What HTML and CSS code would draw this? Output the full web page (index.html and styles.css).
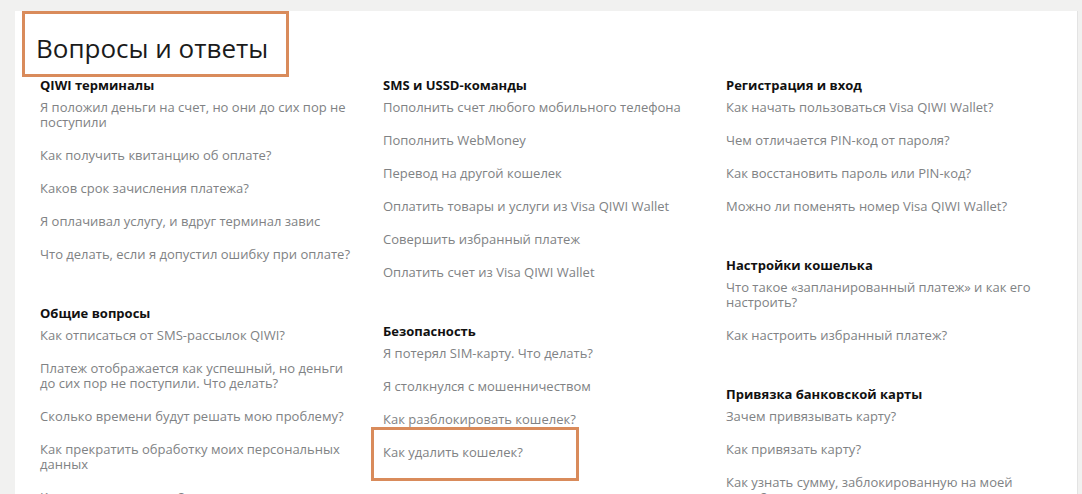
FILE: index.html
```html
<!DOCTYPE html>
<html lang="ru">
<head>
<meta charset="utf-8">
<title>Вопросы и ответы</title>
<link rel="stylesheet" href="styles.css">
</head>
<body>
<div class="card">
  <h1 class="title">Вопросы и ответы</h1>
  <div class="grid">
    <div class="col">
      <section class="sec">
        <h2 class="sec-title">QIWI терминалы</h2>
        <a class="q" href="#">Я положил деньги на счет, но они до сих пор не поступили</a>
        <a class="q" href="#">Как получить квитанцию об оплате?</a>
        <a class="q" href="#">Каков срок зачисления платежа?</a>
        <a class="q" href="#">Я оплачивал услугу, и вдруг терминал завис</a>
        <a class="q" href="#">Что делать, если я допустил ошибку при оплате?</a>
      </section>
      <section class="sec">
        <h2 class="sec-title">Общие вопросы</h2>
        <a class="q" href="#">Как отписаться от SMS-рассылок QIWI?</a>
        <a class="q" href="#">Платеж отображается как успешный, но деньги до сих пор не поступили. Что делать?</a>
        <a class="q" href="#">Сколько времени будут решать мою проблему?</a>
        <a class="q" href="#">Как прекратить обработку моих персональных данных</a>
        <a class="q" href="#">Как изменить данные?</a>
      </section>
    </div>
    <div class="col">
      <section class="sec">
        <h2 class="sec-title">SMS и USSD-команды</h2>
        <a class="q" href="#">Пополнить счет любого мобильного телефона</a>
        <a class="q" href="#">Пополнить WebMoney</a>
        <a class="q" href="#">Перевод на другой кошелек</a>
        <a class="q" href="#">Оплатить товары и услуги из Visa QIWI Wallet</a>
        <a class="q" href="#">Совершить избранный платеж</a>
        <a class="q" href="#">Оплатить счет из Visa QIWI Wallet</a>
      </section>
      <section class="sec">
        <h2 class="sec-title">Безопасность</h2>
        <a class="q" href="#">Я потерял SIM-карту. Что делать?</a>
        <a class="q" href="#">Я столкнулся с мошенничеством</a>
        <a class="q" href="#">Как разблокировать кошелек?</a>
        <a class="q marked" href="#">Как удалить кошелек?<span class="mark"></span></a>
      </section>
    </div>
    <div class="col">
      <section class="sec">
        <h2 class="sec-title">Регистрация и вход</h2>
        <a class="q" href="#">Как начать пользоваться Visa QIWI Wallet?</a>
        <a class="q" href="#">Чем отличается PIN-код от пароля?</a>
        <a class="q" href="#">Как восстановить пароль или PIN-код?</a>
        <a class="q" href="#">Можно ли поменять номер Visa QIWI Wallet?</a>
      </section>
      <section class="sec">
        <h2 class="sec-title">Настройки кошелька</h2>
        <a class="q" href="#">Что такое «запланированный платеж» и как его настроить?</a>
        <a class="q" href="#">Как настроить избранный платеж?</a>
      </section>
      <section class="sec">
        <h2 class="sec-title">Привязка банковской карты</h2>
        <a class="q" href="#">Зачем привязывать карту?</a>
        <a class="q" href="#">Как привязать карту?</a>
        <a class="q" href="#">Как узнать сумму, заблокированную на моей карте?</a>
      </section>
    </div>
  </div>
</div>
</body>
</html>
```

FILE: styles.css
```css
html, body {
  margin: 0;
  padding: 0;
  height: 100%;
  overflow: hidden;
}
body {
  background: #f1f1f0;
  font-family: "Open Sans", "Noto Sans", sans-serif;
}
.card {
  margin: 12px 4px 0 15px;
  min-height: 600px;
  background: #fff;
  border-right: 1px solid #e3e3e3;
}
.title {
  box-sizing: border-box;
  display: block;
  width: 267px;
  height: 66px;
  margin: -1px 0 0 7px;
  padding: 17px 0 0 11px;
  border: 3px solid #d98b5b;
  font-size: 26px;
  font-weight: 400;
  line-height: 34px;
  color: #1b1b1b;
}
.grid {
  display: grid;
  grid-template-columns: 343px 343px 343px;
  padding-left: 25px;
}
.col {
  padding-right: 27px;
}
.sec {
  margin-bottom: 43px;
}
.sec-title {
  margin: 0 0 6px;
  font-size: 13px;
  font-weight: 700;
  line-height: 17px;
  color: #111;
}
.q {
  display: block;
  margin-bottom: 18px;
  font-size: 13px;
  line-height: 15px;
  color: #808284;
  text-decoration: none;
}
.marked {
  position: relative;
}
.mark {
  position: absolute;
  left: -12px;
  top: -18px;
  width: 208px;
  height: 54px;
  box-sizing: border-box;
  border: 3px solid #d98b5b;
}
```
